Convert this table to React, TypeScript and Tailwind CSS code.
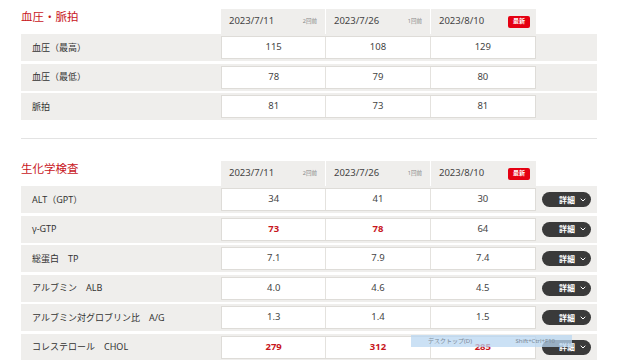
import { ChevronDown } from "lucide-react";

type Row = { label: string; values: string[]; alert?: boolean[] };

const dates = [
  { date: "2023/7/11", tag: "2回前" },
  { date: "2023/7/26", tag: "1回前" },
  { date: "2023/8/10", tag: "最新" },
];

const vitals: Row[] = [
  { label: "血圧（最高）", values: ["115", "108", "129"] },
  { label: "血圧（最低）", values: ["78", "79", "80"] },
  { label: "脈拍", values: ["81", "73", "81"] },
];

const chem: Row[] = [
  { label: "ALT（GPT）", values: ["34", "41", "30"] },
  { label: "γ-GTP", values: ["73", "78", "64"], alert: [true, true, false] },
  { label: "総蛋白　TP", values: ["7.1", "7.9", "7.4"] },
  { label: "アルブミン　ALB", values: ["4.0", "4.6", "4.5"] },
  { label: "アルブミン対グロブリン比　A/G", values: ["1.3", "1.4", "1.5"] },
  { label: "コレステロール　CHOL", values: ["279", "312", "285"], alert: [true, true, true] },
];

function Header({ title }: { title: string }) {
  return (
    <div className="flex h-[25px]">
      <div className="w-[200px] pt-[1px] text-[11.5px] leading-[14px] text-[#c8161d]">{title}</div>
      {dates.map((d, i) => (
        <div
          key={d.date}
          className={`flex w-[105px] items-center justify-between bg-[#efeeec] pl-[8px] ${
            i === 2 ? "pr-[6px]" : "pr-[8px] border-r border-white"
          }`}
        >
          <span className="text-[9.5px] text-[#444]">{d.date}</span>
          {i === 2 ? (
            <span className="flex h-[12px] w-[22px] items-center justify-center rounded-[2px] bg-[#e50012] text-[6px] font-bold text-white">
              {d.tag}
            </span>
          ) : (
            <span className="text-[5.5px] text-[#888]">{d.tag}</span>
          )}
        </div>
      ))}
    </div>
  );
}

function DataRow({ row, button }: { row: Row; button?: boolean }) {
  return (
    <div className="flex h-[27px] items-center bg-[#efeeec]">
      <div className="w-[200px] pl-[11px] text-[9px] text-[#333]">{row.label}</div>
      <div className="flex h-[23px] w-[315px] self-start mt-[2px] border border-[#dedcd8] bg-white">
        {row.values.map((v, i) => (
          <div
            key={i}
            className={`flex w-[105px] items-center justify-center text-[9.5px] ${
              i < 2 ? "border-r border-[#e4e2de]" : ""
            } ${row.alert?.[i] ? "font-bold text-[#c8161d]" : "text-[#444]"}`}
          >
            {v}
          </div>
        ))}
      </div>
      {button && (
        <button className="ml-[6px] flex h-[15px] w-[49px] items-center justify-end gap-[4px] rounded-full bg-[#3a3a3a] pr-[4px] text-[8px] font-bold text-white">
          詳細
          <ChevronDown size={8} strokeWidth={3} />
        </button>
      )}
    </div>
  );
}

export default function App() {
  return (
    <div
      className="relative h-[360px] w-[638px] overflow-hidden bg-white px-[21px] pt-[9px]"
      style={{ fontFamily: '"Noto Sans", "Noto Sans CJK JP", sans-serif' }}
    >
      <div className="w-[576px]">
        <Header title="血圧・脈拍" />
        <div className="flex flex-col gap-[2.5px]">
          {vitals.map((r) => (
            <DataRow key={r.label} row={r} />
          ))}
        </div>
        <div className="mt-[18px] h-px bg-[#e3e3e3]" />
        <div className="mt-[22px]">
          <Header title="生化学検査" />
          <div className="flex flex-col gap-[2.5px]">
            {chem.map((r) => (
              <DataRow key={r.label} row={r} button />
            ))}
          </div>
        </div>
      </div>

      {/* context menu remnant */}
      <div className="absolute left-[411px] top-[335px] flex h-[12px] w-[161px] items-center justify-between bg-[#b9d7f1]/75 px-[17px] text-[6px] text-[#7c8a97]">
        <span>デスクトップ(D)</span>
        <span>Shift+Ctrl+F10</span>
      </div>
    </div>
  );
}
